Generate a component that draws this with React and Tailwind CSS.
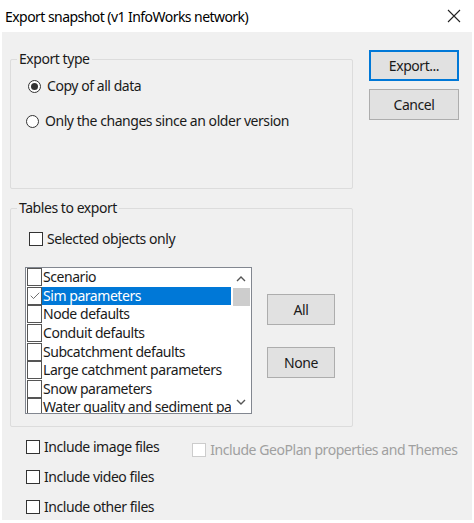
import { Check } from 'lucide-react'

const font = { fontFamily: '"Noto Sans", "Open Sans", sans-serif' }

function Radio({ checked, label }) {
  return (
    <div className="flex items-center gap-[6px]">
      <span className="w-[13px] h-[13px] rounded-full border border-[#333] bg-white flex items-center justify-center shrink-0">
        {checked && <span className="w-[7px] h-[7px] rounded-full bg-[#333]" />}
      </span>
      <span className="whitespace-nowrap">{label}</span>
    </div>
  )
}

function CheckBox({ label, disabled }) {
  return (
    <div className={`flex items-center gap-[4px] whitespace-nowrap ${disabled ? 'text-[#a0a0a0]' : ''}`}>
      <span className={`w-[14px] h-[14px] border bg-white shrink-0 ${disabled ? 'border-[#cccccc]' : 'border-[#333]'}`} />
      <span>{label}</span>
    </div>
  )
}

function Button({ children, primary, className = '' }) {
  return (
    <button
      className={`h-[31px] bg-[#e1e1e1] flex items-center justify-center ${
        primary ? 'border-2 border-[#0078d7]' : 'border border-[#adadad]'
      } ${className}`}
    >
      {children}
    </button>
  )
}

function Group({ label, className = '', children }) {
  return (
    <div className={`relative border border-[#dcdcdc] rounded-[2px] ${className}`}>
      <span className="absolute -top-[11px] left-[6px] px-[2px] bg-[#f0f0f0] leading-[20px] whitespace-nowrap">{label}</span>
      {children}
    </div>
  )
}

const tables = [
  'Scenario',
  'Sim parameters',
  'Node defaults',
  'Conduit defaults',
  'Subcatchment defaults',
  'Large catchment parameters',
  'Snow parameters',
  'Water quality and sediment parameters'
]

export default function App() {
  return (
    <div className="w-[474px] h-[523px] bg-white text-[#1a1a1a] text-[14px] tracking-[-0.45px] overflow-hidden" style={font}>
      {/* Title bar */}
      <div className="h-[32px] flex items-center justify-between pl-[5px] pr-[13px] text-black tracking-[-0.55px]">
        <span>Export snapshot (v1 InfoWorks network)</span>
        <svg width="14" height="14" viewBox="0 0 14 14" stroke="#222" strokeWidth="1.1">
          <path d="M1 1 L13 13 M13 1 L1 13" />
        </svg>
      </div>

      <div className="mx-[2px] h-[488px] bg-[#f0f0f0] px-[8px] pt-[18px]">
        <div className="flex gap-[16px]">
          {/* Left column */}
          <div className="w-[343px] pt-[9px]">
            <Group label="Export type" className="h-[130px] pl-[17px] pt-[16px]">
              <div className="flex flex-col gap-[15px] leading-[20px]">
                <Radio checked label="Copy of all data" />
                <div className="-ml-[2px]">
                  <Radio label="Only the changes since an older version" />
                </div>
              </div>
            </Group>

            <Group label="Tables to export" className="mt-[19px] h-[219px] pl-[18px] pt-[19px]">
              <CheckBox label="Selected objects only" />
              <div className="flex mt-[18px] -ml-[4px]">
                <div className="w-[227px] h-[147px] border border-[#828790] bg-white flex overflow-hidden">
                  <div className="flex-1 overflow-hidden">
                    {tables.map((t, i) => (
                      <div key={t} className="h-[18.6px] flex items-center whitespace-nowrap">
                        <span className="ml-[1px] w-[15px] h-[18px] border border-[#555] bg-white shrink-0 flex items-center justify-center">
                          {i === 1 && <Check size={12} strokeWidth={1.4} color="#333" />}
                        </span>
                        <span
                          className={`pl-[1px] pr-[2px] leading-[18px] ${
                            i === 1 ? 'bg-[#0078d7] text-white flex-1' : ''
                          }`}
                        >
                          {t}
                        </span>
                      </div>
                    ))}
                  </div>
                  <div className="w-[20px] shrink-0 flex flex-col items-center bg-white">
                    <svg width="10" height="6" viewBox="0 0 10 6" className="mt-[8px]" fill="none" stroke="#555" strokeWidth="1.4">
                      <path d="M1 5 L5 1 L9 5" />
                    </svg>
                    <div className="w-[17px] h-[18px] bg-[#cdcdcd] mt-[6px]" />
                    <div className="flex-1" />
                    <svg width="10" height="6" viewBox="0 0 10 6" className="mb-[8px]" fill="none" stroke="#555" strokeWidth="1.4">
                      <path d="M1 1 L5 5 L9 1" />
                    </svg>
                  </div>
                </div>
                <div className="ml-[15px] pt-[27px] flex flex-col gap-[22px]">
                  <Button className="w-[68px] h-[31px]">All</Button>
                  <Button className="w-[68px] h-[31px]">None</Button>
                </div>
              </div>
            </Group>
          </div>

          {/* Right column */}
          <div className="w-[90px] flex flex-col gap-[8px]">
            <Button primary className="w-[90px]">Export...</Button>
            <Button className="w-[90px]">Cancel</Button>
          </div>
        </div>

        <div className="flex mt-[13px] pl-[16px]">
          <div className="flex flex-col gap-[16px] leading-[14px]">
            <CheckBox label="Include image files" />
            <CheckBox label="Include video files" />
            <CheckBox label="Include other files" />
          </div>
          <div className="ml-[33px] mt-[3px] leading-[14px]">
            <CheckBox disabled label="Include GeoPlan properties and Themes" />
          </div>
        </div>
      </div>
    </div>
  )
}
